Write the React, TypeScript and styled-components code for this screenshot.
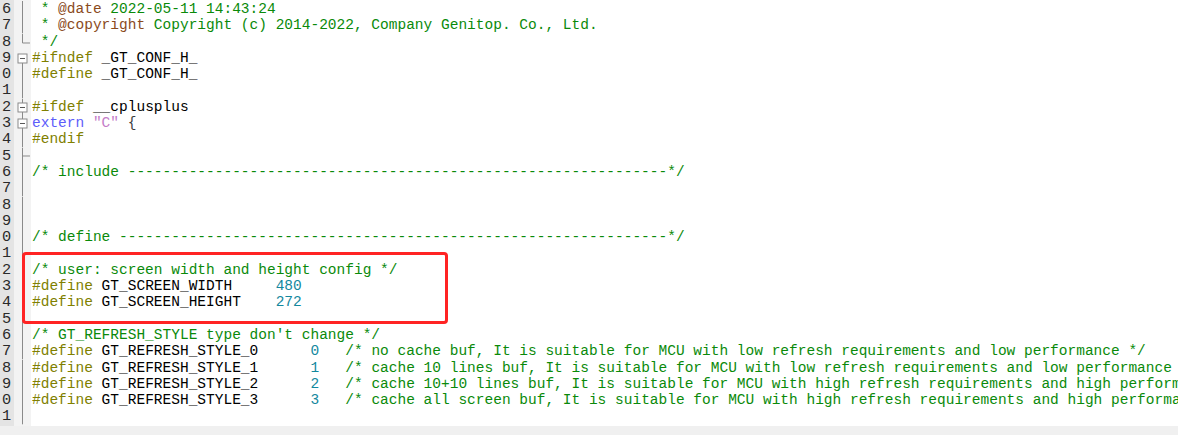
import React from "react";
import styled, { createGlobalStyle } from "styled-components";

const Global = createGlobalStyle`
  html, body { margin: 0; padding: 0; background: #ffffff; }
  body { width: 1178px; height: 435px; overflow: hidden; }
`;

type Tone = "plain" | "comment" | "doctag" | "pre" | "num" | "kw" | "str" | "op";
type Seg = [string, Tone];
type FoldKind = "line" | "end" | "tee" | "boxTop" | "boxInner";

const ROW_H = 16.3;

const toneColor: Record<Tone, string> = {
  plain: "#000000",
  comment: "#0a8a0a",
  doctag: "#8a4a1c",
  pre: "#808000",
  num: "#13889e",
  kw: "#5d5dfa",
  str: "#c47cc8",
  op: "#3c3c3c",
};

const Screen = styled.div`
  position: relative;
  width: 1178px;
  height: 435px;
  display: flex;
  flex-direction: column;
  overflow: hidden;
  background: #ffffff;
`;

const Editor = styled.div`
  flex: 0 0 426px;
  display: flex;
  flex-direction: column;
  padding-top: 1px;
  box-sizing: border-box;
  background: linear-gradient(
    to right,
    #e4e4e4 0 14px,
    #f3f3f3 14px 31px,
    #ffffff 31px
  );
  overflow: hidden;
`;

const Row = styled.div`
  display: flex;
  height: ${ROW_H}px;
  flex: 0 0 ${ROW_H}px;
  align-items: stretch;
`;

const LineNo = styled.div`
  width: 14px;
  flex: 0 0 14px;
  display: flex;
  padding-left: 2px;
  box-sizing: border-box;
`;

const DigitWindow = styled.div`
  width: 9.2px;
  display: flex;
  justify-content: flex-end;
  align-items: center;
  overflow: hidden;
  font-family: "Liberation Mono", monospace;
  font-size: 15.3px;
  line-height: ${ROW_H}px;
  color: #2a2a2a;
  white-space: pre;
`;

const Fold = styled.div`
  width: 17px;
  flex: 0 0 17px;
  display: flex;
`;

const Code = styled.div`
  flex: 1;
  padding-left: 1px;
  font-family: "Liberation Mono", monospace;
  font-size: 14.5px;
  line-height: ${ROW_H}px;
  white-space: pre;
`;

const Tok = styled.span<{ $tone: Tone }>`
  color: ${(p) => toneColor[p.$tone]};
`;

const ScrollStrip = styled.div`
  flex: 1;
  background: #f0f0f0;
`;

const Highlight = styled.div`
  position: absolute;
  left: 22px;
  top: 252px;
  width: 426px;
  height: 72px;
  box-sizing: border-box;
  border: 3px solid #ff2323;
  border-radius: 4px;
  pointer-events: none;
`;

const FoldMark: React.FC<{ kind: FoldKind }> = ({ kind }) => {
  const H = ROW_H;
  const mid = 8.5;
  const x = 8.5;
  const stroke = "#8a8a8a";
  const boxTop = mid - 4.5;
  const boxBot = mid + 4.5;
  return (
    <svg width="17" height={H} viewBox={`0 0 17 ${H}`} style={{ display: "block" }}>
      {kind === "line" && <line x1={x} y1={0} x2={x} y2={H} stroke={stroke} />}
      {kind === "end" && (
        <>
          <line x1={x} y1={0} x2={x} y2={mid + 0.5} stroke={stroke} />
          <line x1={x} y1={mid + 0.5} x2={16} y2={mid + 0.5} stroke={stroke} />
        </>
      )}
      {kind === "tee" && (
        <>
          <line x1={x} y1={0} x2={x} y2={H} stroke={stroke} />
          <line x1={x} y1={mid - 0.5} x2={16} y2={mid - 0.5} stroke={stroke} />
        </>
      )}
      {(kind === "boxTop" || kind === "boxInner") && (
        <>
          {kind === "boxInner" && (
            <line x1={x} y1={0} x2={x} y2={boxTop} stroke={stroke} />
          )}
          <rect
            x={4}
            y={boxTop}
            width={9}
            height={9}
            fill="#ffffff"
            stroke={stroke}
          />
          <line x1={6} y1={mid} x2={11} y2={mid} stroke="#555555" />
          <line x1={x} y1={boxBot} x2={x} y2={H} stroke={stroke} />
        </>
      )}
    </svg>
  );
};

const dash = (n: number) => "-".repeat(n);

const rows: { n: number; fold: FoldKind; segs: Seg[] }[] = [
  {
    n: 6,
    fold: "line",
    segs: [
      [" * ", "comment"],
      ["@date", "doctag"],
      [" 2022-05-11 14:43:24", "comment"],
    ],
  },
  {
    n: 7,
    fold: "line",
    segs: [
      [" * ", "comment"],
      ["@copyright", "doctag"],
      [" Copyright (c) 2014-2022, Company Genitop. Co., Ltd.", "comment"],
    ],
  },
  { n: 8, fold: "end", segs: [[" */", "comment"]] },
  {
    n: 9,
    fold: "boxTop",
    segs: [
      ["#ifndef", "pre"],
      [" _GT_CONF_H_", "plain"],
    ],
  },
  {
    n: 10,
    fold: "line",
    segs: [
      ["#define", "pre"],
      [" _GT_CONF_H_", "plain"],
    ],
  },
  { n: 11, fold: "line", segs: [] },
  {
    n: 12,
    fold: "boxInner",
    segs: [
      ["#ifdef", "pre"],
      [" __cplusplus", "plain"],
    ],
  },
  {
    n: 13,
    fold: "boxInner",
    segs: [
      ["extern", "kw"],
      [" ", "plain"],
      ['"C"', "str"],
      [" ", "plain"],
      ["{", "op"],
    ],
  },
  { n: 14, fold: "line", segs: [["#endif", "pre"]] },
  { n: 15, fold: "tee", segs: [] },
  {
    n: 16,
    fold: "line",
    segs: [["/* include " + dash(62) + "*/", "comment"]],
  },
  { n: 17, fold: "line", segs: [] },
  { n: 18, fold: "line", segs: [] },
  { n: 19, fold: "line", segs: [] },
  {
    n: 20,
    fold: "line",
    segs: [["/* define " + dash(63) + "*/", "comment"]],
  },
  { n: 21, fold: "line", segs: [] },
  {
    n: 22,
    fold: "line",
    segs: [["/* user: screen width and height config */", "comment"]],
  },
  {
    n: 23,
    fold: "line",
    segs: [
      ["#define", "pre"],
      [" GT_SCREEN_WIDTH     ", "plain"],
      ["480", "num"],
    ],
  },
  {
    n: 24,
    fold: "line",
    segs: [
      ["#define", "pre"],
      [" GT_SCREEN_HEIGHT    ", "plain"],
      ["272", "num"],
    ],
  },
  { n: 25, fold: "line", segs: [] },
  {
    n: 26,
    fold: "line",
    segs: [["/* GT_REFRESH_STYLE type don't change */", "comment"]],
  },
  {
    n: 27,
    fold: "line",
    segs: [
      ["#define", "pre"],
      [" GT_REFRESH_STYLE_0      ", "plain"],
      ["0", "num"],
      ["   ", "plain"],
      [
        "/* no cache buf, It is suitable for MCU with low refresh requirements and low performance */",
        "comment",
      ],
    ],
  },
  {
    n: 28,
    fold: "line",
    segs: [
      ["#define", "pre"],
      [" GT_REFRESH_STYLE_1      ", "plain"],
      ["1", "num"],
      ["   ", "plain"],
      [
        "/* cache 10 lines buf, It is suitable for MCU with low refresh requirements and low performance */",
        "comment",
      ],
    ],
  },
  {
    n: 29,
    fold: "line",
    segs: [
      ["#define", "pre"],
      [" GT_REFRESH_STYLE_2      ", "plain"],
      ["2", "num"],
      ["   ", "plain"],
      [
        "/* cache 10+10 lines buf, It is suitable for MCU with high refresh requirements and high performance */",
        "comment",
      ],
    ],
  },
  {
    n: 30,
    fold: "line",
    segs: [
      ["#define", "pre"],
      [" GT_REFRESH_STYLE_3      ", "plain"],
      ["3", "num"],
      ["   ", "plain"],
      [
        "/* cache all screen buf, It is suitable for MCU with high refresh requirements and high performance */",
        "comment",
      ],
    ],
  },
  { n: 31, fold: "line", segs: [] },
];

export default function App() {
  return (
    <>
      <Global />
      <Screen>
        <Editor>
          {rows.map((r) => (
            <Row key={r.n}>
              <LineNo>
                <DigitWindow>{String(r.n)}</DigitWindow>
              </LineNo>
              <Fold>
                <FoldMark kind={r.fold} />
              </Fold>
              <Code>
                {r.segs.map((s, i) => (
                  <Tok key={i} $tone={s[1]}>
                    {s[0]}
                  </Tok>
                ))}
              </Code>
            </Row>
          ))}
        </Editor>
        <ScrollStrip />
        <Highlight />
      </Screen>
    </>
  );
}
